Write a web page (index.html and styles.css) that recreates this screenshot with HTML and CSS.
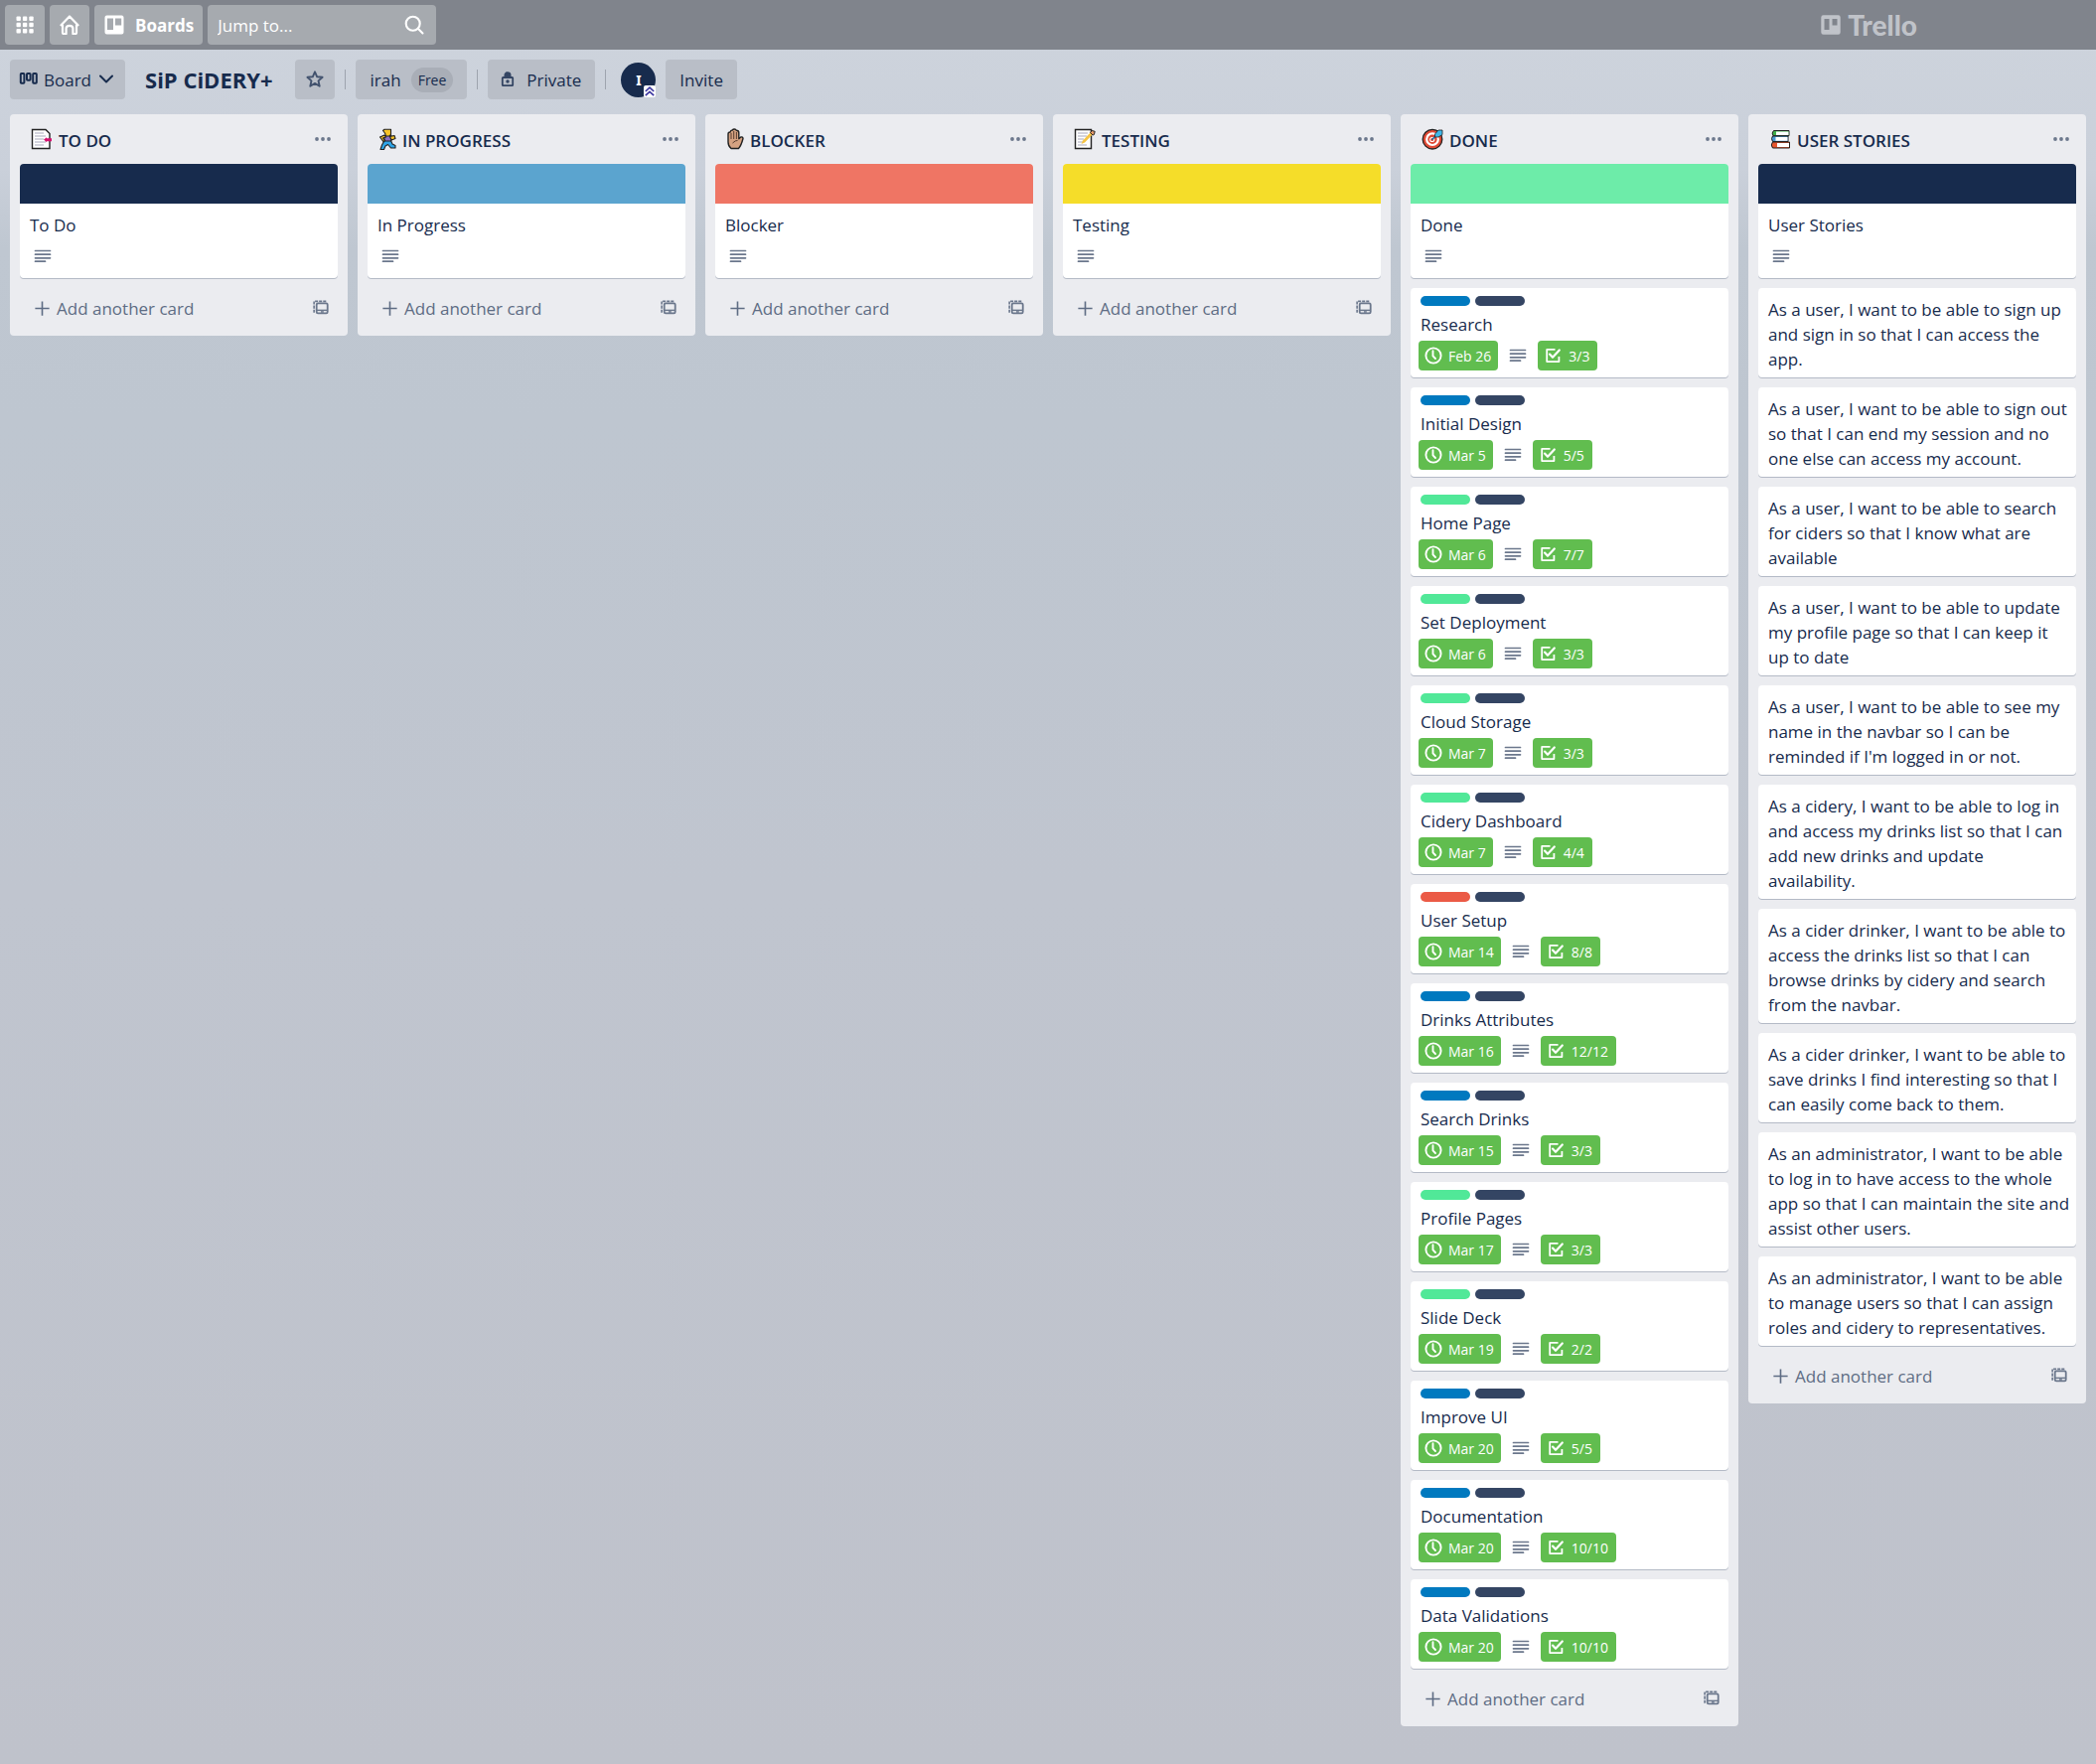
FILE: index.html
```html
<!DOCTYPE html>
<html lang="en">
<head>
<meta charset="utf-8">
<meta name="viewport" content="width=device-width, initial-scale=1">
<title>SiP CiDERY+ | Trello</title>
<link rel="stylesheet" href="styles.css">
</head>
<body>
<svg class="sprite" aria-hidden="true">
  <symbol id="i-desc" viewBox="0 0 20 20"><path d="M2.500 4.500h15M2.500 8.200h15M2.500 11.800h15M2.500 15.200h10" fill="none" stroke="currentColor" stroke-width="1.700" stroke-linecap="round"/></symbol>
  <symbol id="i-clock" viewBox="0 0 20 20"><circle cx="10" cy="10" r="7.600" fill="none" stroke="currentColor" stroke-width="1.900"/><path d="M9.500 5.200v5.200l2.500 2.600" fill="none" stroke="currentColor" stroke-width="1.900" stroke-linecap="round"/></symbol>
  <symbol id="i-check" viewBox="0 0 20 20"><path d="M12.500 3.900H4.200v12.200h12.200V11" fill="none" stroke="currentColor" stroke-width="1.800" stroke-linejoin="round"/><path d="M7 8.600l3 3.200 6.800-7.300" fill="none" stroke="currentColor" stroke-width="2.200" stroke-linecap="round" stroke-linejoin="round"/></symbol>
  <symbol id="i-plus" viewBox="0 0 20 20"><path d="M10 2.500v15M2.500 10h15" fill="none" stroke="currentColor" stroke-width="1.700"/></symbol>
  <symbol id="i-dots" viewBox="0 0 20 20"><circle cx="4" cy="10" r="1.900" fill="currentColor"/><circle cx="10" cy="10" r="1.900" fill="currentColor"/><circle cx="16" cy="10" r="1.900" fill="currentColor"/></symbol>
  <symbol id="i-template" viewBox="0 0 20 20"><path d="M3.300 15.500V3.600h13" fill="none" stroke="currentColor" stroke-width="1.700" stroke-dasharray="3.200 1.100"/><rect x="6" y="5.600" width="11.600" height="10.600" rx="1.400" fill="none" stroke="currentColor" stroke-width="1.900"/><path d="M6 13h11.500" stroke="currentColor" stroke-width="1.500"/><path d="M10.500 14.700h3" stroke="currentColor" stroke-width="1.600"/></symbol>
</svg>

<header class="topbar">
  <button class="tile" type="button" aria-label="More from Atlassian"><svg class="icon20" viewBox="0 0 20 20" fill="#fff"><rect x="1.500" y="1.500" width="4.400" height="4.400" rx="1"/><rect x="7.900" y="1.500" width="4.400" height="4.400" rx="1"/><rect x="14.300" y="1.500" width="4.400" height="4.400" rx="1"/><rect x="1.500" y="7.800" width="4.400" height="4.400" rx="1"/><rect x="7.900" y="7.800" width="4.400" height="4.400" rx="1"/><rect x="14.300" y="7.800" width="4.400" height="4.400" rx="1"/><rect x="1.500" y="14" width="4.400" height="4.400" rx="1"/><rect x="7.900" y="14" width="4.400" height="4.400" rx="1"/><rect x="14.300" y="14" width="4.400" height="4.400" rx="1"/></svg></button>
  <button class="tile" type="button" aria-label="Home"><svg class="icon20" viewBox="0 0 20 20" fill="none" stroke="#fff" stroke-width="2.200" stroke-linejoin="round" stroke-linecap="round"><path d="M3 10.500v7.500q0 1 1 1h2.600v-5.500q0-2.700 3.400-2.700t3.400 2.700V19H16q1 0 1-1v-7.500M1.500 10.300 10 1.500l8.500 8.800"/></svg></button>
  <button class="tile tile-boards" type="button"><svg class="icon20" viewBox="0 0 20 20"><path fill="#fff" fill-rule="evenodd" d="M2.500.5h15a2 2 0 0 1 2 2v15a2 2 0 0 1-2 2h-15a2 2 0 0 1-2-2v-15a2 2 0 0 1 2-2zM3 3.500v11.500h6V3.500zM11 3.500v7h6.200v-7z"/></svg><span>Boards</span></button>
  <label class="search"><input type="text" placeholder="Jump to..." aria-label="Jump to"><svg class="icon20" viewBox="0 0 20 20" fill="none" stroke="#fff" stroke-width="2.100" stroke-linecap="round"><circle cx="8.700" cy="8.700" r="7"/><path d="M13.800 13.800 18.500 18.500"/></svg></label>
  <a class="logo" href="#"><svg class="icon20" viewBox="0 0 20 20"><path fill="currentColor" fill-rule="evenodd" d="M2.500.3h15a2.200 2.200 0 0 1 2.200 2.200v15a2.200 2.200 0 0 1-2.200 2.200h-15a2.200 2.200 0 0 1-2.200-2.200v-15A2.200 2.200 0 0 1 2.500.3zM3.500 4v11h5V4zM11.500 4v6.500h5V4z"/></svg><span>Trello</span></a>
</header>

<main>
  <div class="board-header">
    <button class="btn btn-view" type="button"><svg class="icon20" viewBox="0 0 20 20" fill="none" stroke="#172b4d" stroke-width="2"><rect x="1.800" y="4" width="3.600" height="9.800" rx=".8"/><rect x="8" y="4" width="3.600" height="6.800" rx=".8"/><rect x="14.200" y="4" width="3.600" height="9.800" rx=".8"/></svg><span>Board</span><svg class="icon20 chevron" viewBox="0 0 20 20" fill="none" stroke="#172b4d" stroke-width="2" stroke-linecap="round" stroke-linejoin="round"><path d="M4 6.500 10 12.500 16 6.500"/></svg></button>
    <h1>SiP CiDERY+</h1>
    <button class="btn btn-star" type="button" aria-label="Star board"><svg class="icon20" viewBox="0 0 20 20" fill="none" stroke="#42526e" stroke-width="1.900" stroke-linejoin="round"><path d="M10 2.300l2.200 5 5.400.5-4.100 3.600 1.200 5.300L10 13.900l-4.700 2.800 1.200-5.300L2.400 7.800l5.400-.5z"/></svg></button>
    <span class="divider"></span>
    <button class="btn btn-team" type="button">irah <span class="pill">Free</span></button>
    <span class="divider"></span>
    <button class="btn btn-private" type="button"><svg class="icon20" viewBox="0 0 20 20"><path fill="#344563" fill-rule="evenodd" d="M6.500 7V5.500C6.500 3.500 8 2.300 10 2.300s3.500 1.200 3.500 3.200V7H14.500a1.600 1.600 0 0 1 1.600 1.600v6.900a1.600 1.600 0 0 1-1.600 1.600h-9a1.600 1.600 0 0 1-1.600-1.600V8.600A1.600 1.600 0 0 1 5.500 7zM5.700 8.900v6.400h8.600V8.900z"/><circle cx="10" cy="12" r="1.700" fill="#344563"/></svg><span>Private</span></button>
    <span class="divider"></span>
    <div class="avatar">I<svg viewBox="0 0 12 12"><rect width="12" height="12" rx="2" fill="#fff"/><path d="M1.800 6 6 2.200 10.200 6M1.800 10.200 6 6.400l4.200 3.800" fill="none" stroke="#3b35a0" stroke-width="1.600"/></svg></div>
    <button class="btn btn-invite" type="button">Invite</button>
  </div>

  <div class="lists">
    <section class="list">
      <div class="list-head"><svg class="emoji" viewBox="0 0 22 22"><path d="M1.500 1.500H15l4 4v15h-17.500z" fill="#fff" stroke="#222" stroke-width="1.400"/><path d="M4 5h9M4 8h11M4 11h9M4 14h11M4 17h9" stroke="#aab" stroke-width="1.200"/><path d="M13 11.500l3-2.200v1h5v3h-5v1z" fill="#d6116f"/></svg><h2>TO DO</h2><button class="menu" type="button" aria-label="List actions"><svg><use href="#i-dots"/></svg></button></div>
      <article class="card"><div class="cover navy"></div><p>To Do</p><div class="badges"><svg class="desc"><use href="#i-desc"/></svg></div></article>
      <div class="list-foot"><button class="add" type="button"><svg><use href="#i-plus"/></svg>Add another card</button><button class="template" type="button" aria-label="Create from template"><svg><use href="#i-template"/></svg></button></div>
    </section>

    <section class="list">
      <div class="list-head"><svg class="emoji emoji-slim" viewBox="0 0 18 22"><g stroke="#222" stroke-width="1.100" stroke-linejoin="round"><path d="M6 12.500h6.500l1.500 3.500 3 1.500V20h-4.500l-3-3.500L7 18l-1.500 3.500H2L3.500 17z" fill="#2fa5e8"/><path d="M5 7.500h7l2.500 1-2 4.500H6.500z" fill="#8b6fc0"/><path d="M1.500 9 6 7l1.500 2-3 1 2 2.500-1.500 1.200zM11.500 8.500l4.500-1 1 3-4 1.500z" fill="#f7c325"/><path d="M4.500 2.500 6 1.300h6.500v5.200L11 8H7.500L6.500 5z" fill="#f7c325"/></g></svg><h2>IN PROGRESS</h2><button class="menu" type="button" aria-label="List actions"><svg><use href="#i-dots"/></svg></button></div>
      <article class="card"><div class="cover blue"></div><p>In Progress</p><div class="badges"><svg class="desc"><use href="#i-desc"/></svg></div></article>
      <div class="list-foot"><button class="add" type="button"><svg><use href="#i-plus"/></svg>Add another card</button><button class="template" type="button" aria-label="Create from template"><svg><use href="#i-template"/></svg></button></div>
    </section>

    <section class="list">
      <div class="list-head"><svg class="emoji emoji-slim" viewBox="0 0 18 22"><path d="M2 6q0-2 2-2 .5-2 2.300-2 .7-1 2-1 1.500 0 2 1.200 2.500 0 2.500 2.500v6l2-1.700q2-.5 2.200 1.500Q15 18 12.500 20.500H5Q2 18 2 14z" fill="#d5a281" stroke="#222" stroke-width="1.400" stroke-linejoin="round"/><path d="M5 5v6M7.700 3v8M10.400 4v7M6.500 15q3-3 5-2.500" fill="none" stroke="#4a3226" stroke-width=".9"/></svg><h2>BLOCKER</h2><button class="menu" type="button" aria-label="List actions"><svg><use href="#i-dots"/></svg></button></div>
      <article class="card"><div class="cover coral"></div><p>Blocker</p><div class="badges"><svg class="desc"><use href="#i-desc"/></svg></div></article>
      <div class="list-foot"><button class="add" type="button"><svg><use href="#i-plus"/></svg>Add another card</button><button class="template" type="button" aria-label="Create from template"><svg><use href="#i-template"/></svg></button></div>
    </section>

    <section class="list">
      <div class="list-head"><svg class="emoji" viewBox="0 0 22 22"><path d="M1.500 1.500h16v19h-16z" fill="#fff" stroke="#222" stroke-width="1.400"/><path d="M4 5h10M4 8h9M4 11h6M4 14h5M4 17h9" stroke="#aab" stroke-width="1.200"/><path d="M7.500 16 9 12.500l8-8.500 2.200 2L11 14.500z" fill="#f6c443"/><path d="m16.500 4.500 1.700-2 3 .8-.8 3.200-1.300.5z" fill="#e79a6b" stroke="#222"/></svg><h2>TESTING</h2><button class="menu" type="button" aria-label="List actions"><svg><use href="#i-dots"/></svg></button></div>
      <article class="card"><div class="cover yellow"></div><p>Testing</p><div class="badges"><svg class="desc"><use href="#i-desc"/></svg></div></article>
      <div class="list-foot"><button class="add" type="button"><svg><use href="#i-plus"/></svg>Add another card</button><button class="template" type="button" aria-label="Create from template"><svg><use href="#i-template"/></svg></button></div>
    </section>

    <section class="list">
      <div class="list-head"><svg class="emoji" viewBox="0 0 22 22"><circle cx="11" cy="11.200" r="9.800" fill="#e04a35" stroke="#222" stroke-width="1.300"/><circle cx="11" cy="11.200" r="5.800" fill="none" stroke="#fff" stroke-width="2.200"/><circle cx="10.700" cy="11.500" r="2.600" fill="#fff"/><circle cx="10.700" cy="11.500" r="1.500" fill="#e04a35"/><path d="M10.500 11.700 15 7" stroke="#1d6fa5" stroke-width="1.600"/><path d="m13.500 6 3.500-4h4v4.500l-4 2.500h-3.500z" fill="#3fb8ea" stroke="#222" stroke-width=".8"/></svg><h2>DONE</h2><button class="menu" type="button" aria-label="List actions"><svg><use href="#i-dots"/></svg></button></div>
      <article class="card"><div class="cover mint"></div><p>Done</p><div class="badges"><svg class="desc"><use href="#i-desc"/></svg></div></article>
      <article class="card"><div class="labels"><i class="l-blue"></i><i class="l-dark"></i></div><p>Research</p><div class="badges"><span class="badge"><svg><use href="#i-clock"/></svg>Feb 26</span><svg class="desc"><use href="#i-desc"/></svg><span class="badge checks"><svg><use href="#i-check"/></svg>3/3</span></div></article>
      <article class="card"><div class="labels"><i class="l-blue"></i><i class="l-dark"></i></div><p>Initial Design</p><div class="badges"><span class="badge"><svg><use href="#i-clock"/></svg>Mar 5</span><svg class="desc"><use href="#i-desc"/></svg><span class="badge checks"><svg><use href="#i-check"/></svg>5/5</span></div></article>
      <article class="card"><div class="labels"><i class="l-green"></i><i class="l-dark"></i></div><p>Home Page</p><div class="badges"><span class="badge"><svg><use href="#i-clock"/></svg>Mar 6</span><svg class="desc"><use href="#i-desc"/></svg><span class="badge checks"><svg><use href="#i-check"/></svg>7/7</span></div></article>
      <article class="card"><div class="labels"><i class="l-green"></i><i class="l-dark"></i></div><p>Set Deployment</p><div class="badges"><span class="badge"><svg><use href="#i-clock"/></svg>Mar 6</span><svg class="desc"><use href="#i-desc"/></svg><span class="badge checks"><svg><use href="#i-check"/></svg>3/3</span></div></article>
      <article class="card"><div class="labels"><i class="l-green"></i><i class="l-dark"></i></div><p>Cloud Storage</p><div class="badges"><span class="badge"><svg><use href="#i-clock"/></svg>Mar 7</span><svg class="desc"><use href="#i-desc"/></svg><span class="badge checks"><svg><use href="#i-check"/></svg>3/3</span></div></article>
      <article class="card"><div class="labels"><i class="l-green"></i><i class="l-dark"></i></div><p>Cidery Dashboard</p><div class="badges"><span class="badge"><svg><use href="#i-clock"/></svg>Mar 7</span><svg class="desc"><use href="#i-desc"/></svg><span class="badge checks"><svg><use href="#i-check"/></svg>4/4</span></div></article>
      <article class="card"><div class="labels"><i class="l-red"></i><i class="l-dark"></i></div><p>User Setup</p><div class="badges"><span class="badge"><svg><use href="#i-clock"/></svg>Mar 14</span><svg class="desc"><use href="#i-desc"/></svg><span class="badge checks"><svg><use href="#i-check"/></svg>8/8</span></div></article>
      <article class="card"><div class="labels"><i class="l-blue"></i><i class="l-dark"></i></div><p>Drinks Attributes</p><div class="badges"><span class="badge"><svg><use href="#i-clock"/></svg>Mar 16</span><svg class="desc"><use href="#i-desc"/></svg><span class="badge checks"><svg><use href="#i-check"/></svg>12/12</span></div></article>
      <article class="card"><div class="labels"><i class="l-blue"></i><i class="l-dark"></i></div><p>Search Drinks</p><div class="badges"><span class="badge"><svg><use href="#i-clock"/></svg>Mar 15</span><svg class="desc"><use href="#i-desc"/></svg><span class="badge checks"><svg><use href="#i-check"/></svg>3/3</span></div></article>
      <article class="card"><div class="labels"><i class="l-green"></i><i class="l-dark"></i></div><p>Profile Pages</p><div class="badges"><span class="badge"><svg><use href="#i-clock"/></svg>Mar 17</span><svg class="desc"><use href="#i-desc"/></svg><span class="badge checks"><svg><use href="#i-check"/></svg>3/3</span></div></article>
      <article class="card"><div class="labels"><i class="l-green"></i><i class="l-dark"></i></div><p>Slide Deck</p><div class="badges"><span class="badge"><svg><use href="#i-clock"/></svg>Mar 19</span><svg class="desc"><use href="#i-desc"/></svg><span class="badge checks"><svg><use href="#i-check"/></svg>2/2</span></div></article>
      <article class="card"><div class="labels"><i class="l-blue"></i><i class="l-dark"></i></div><p>Improve UI</p><div class="badges"><span class="badge"><svg><use href="#i-clock"/></svg>Mar 20</span><svg class="desc"><use href="#i-desc"/></svg><span class="badge checks"><svg><use href="#i-check"/></svg>5/5</span></div></article>
      <article class="card"><div class="labels"><i class="l-blue"></i><i class="l-dark"></i></div><p>Documentation</p><div class="badges"><span class="badge"><svg><use href="#i-clock"/></svg>Mar 20</span><svg class="desc"><use href="#i-desc"/></svg><span class="badge checks"><svg><use href="#i-check"/></svg>10/10</span></div></article>
      <article class="card"><div class="labels"><i class="l-blue"></i><i class="l-dark"></i></div><p>Data Validations</p><div class="badges"><span class="badge"><svg><use href="#i-clock"/></svg>Mar 20</span><svg class="desc"><use href="#i-desc"/></svg><span class="badge checks"><svg><use href="#i-check"/></svg>10/10</span></div></article>
      <div class="list-foot"><button class="add" type="button"><svg><use href="#i-plus"/></svg>Add another card</button><button class="template" type="button" aria-label="Create from template"><svg><use href="#i-template"/></svg></button></div>
    </section>

    <section class="list">
      <div class="list-head"><svg class="emoji" viewBox="0 0 22 22"><g stroke="#222" stroke-width="1"><path d="M20 2.500H4.500Q2 5 4 7.700H20z" fill="#3fae49"/><path d="M19 8H3.500Q1.500 10.500 3.500 13.500H19z" fill="#4a9ad4"/><path d="M20.500 14H3.500Q1 17 3.500 20H20.500z" fill="#e8562f"/></g><path d="M7 3.500h12.500v3.400H7zM6.500 9H18.500v3.800H6.500zM8 15h12v4H8z" fill="#fff"/></svg><h2>USER STORIES</h2><button class="menu" type="button" aria-label="List actions"><svg><use href="#i-dots"/></svg></button></div>
      <article class="card"><div class="cover navy"></div><p>User Stories</p><div class="badges"><svg class="desc"><use href="#i-desc"/></svg></div></article>
      <article class="card"><p>As a user, I want to be able to sign up and sign in so that I can access the app.</p></article>
      <article class="card"><p>As a user, I want to be able to sign out so that I can end my session and no one else can access my account.</p></article>
      <article class="card"><p>As a user, I want to be able to search for ciders so that I know what are available</p></article>
      <article class="card"><p>As a user, I want to be able to update my profile page so that I can keep it up&nbsp;to date</p></article>
      <article class="card"><p>As a user, I want to be able to see my name in the navbar so I can be reminded if I'm logged in or not.</p></article>
      <article class="card"><p>As a cidery, I want to be able to log in and access my drinks list so that I can add new drinks and update availability.</p></article>
      <article class="card"><p>As a cider drinker, I want to be able to access the drinks list so that I can browse drinks by cidery and search from the navbar.</p></article>
      <article class="card"><p>As a cider drinker, I want to be able to save drinks I find interesting so that I can easily come back to them.</p></article>
      <article class="card"><p>As an administrator, I want to be able to log in to have access to the whole app so that I can maintain the site and assist other users.</p></article>
      <article class="card"><p>As an administrator, I want to be able to manage users so that I can assign roles and cidery to representatives.</p></article>
      <div class="list-foot"><button class="add" type="button"><svg><use href="#i-plus"/></svg>Add another card</button><button class="template" type="button" aria-label="Create from template"><svg><use href="#i-template"/></svg></button></div>
    </section>
  </div>
</main>
</body>
</html>
```

FILE: styles.css
```css
* { box-sizing: border-box; }

body {
  margin: 0;
  min-height: 100vh;
  font: 17px/25px "Open Sans", "Noto Sans", sans-serif;
  color: #172b4d;
  background: linear-gradient(#ced4dd 0, #cad0da 170px, #bfc7d1 250px, #bec6d0 420px, #c0c5cf 900px, #bfc2cb 100%);
}

button, input { font: inherit; color: inherit; border: 0; margin: 0; }
button { cursor: pointer; }
h1, h2, p { margin: 0; }
svg { display: block; flex: none; }

.sprite { position: absolute; width: 0; height: 0; }
.icon20 { width: 20px; height: 20px; }

.topbar {
  display: flex;
  align-items: center;
  gap: 5px;
  height: 50px;
  padding: 5px;
  background: #80848c;
}

.tile, .search {
  display: flex;
  align-items: center;
  justify-content: center;
  height: 40px;
  border-radius: 4px;
  background: #a6aaaf;
  color: #fff;
}
.tile { width: 40px; padding: 0; }
.tile-boards { width: auto; padding: 0 9px 0 10px; gap: 11px; font-weight: 700; }

.search { width: 230px; padding: 0 12px 0 10px; }
.search input { flex: 1; min-width: 0; padding: 0; background: none; outline: 0; }
.search input::placeholder { color: #fff; opacity: 1; }

.logo {
  display: flex;
  align-items: center;
  gap: 7px;
  margin-left: auto;
  margin-right: 175px;
  font: 900 28px/30px Lato, sans-serif;
  color: #c0c3c9;
  text-decoration: none;
}

.board-header {
  display: flex;
  align-items: center;
  gap: 10px;
  padding: 10px 10px 15px;
}
.board-header h1 { padding: 0 12px 0 10px; font-size: 22px; line-height: 40px; font-weight: 700; }

.btn {
  display: flex;
  align-items: center;
  height: 40px;
  padding: 0 15px;
  border-radius: 4px;
  background: #b9bec7;
}
.btn-view { padding: 0 9px; gap: 5px; }
.btn-star { padding: 0 10px; }
.btn-team { padding: 0 14px 0 15px; gap: 10px; }
.btn-private { padding: 0 14px 0 10px; gap: 9px; }
.btn-invite { padding: 0 14px; }

.pill {
  padding: 0 7px;
  border-radius: 13px;
  background: #a9aeb7;
  font-size: 14px;
}

.divider { width: 1px; height: 20px; background: #9ea4ae; }

.avatar {
  position: relative;
  width: 35px;
  height: 35px;
  margin-left: 5px;
  border-radius: 50%;
  background: #172b4d;
  color: #fff;
  font: 700 14px/35px "Noto Sans", sans-serif;
  text-align: center;
}
.avatar svg { position: absolute; right: 0; bottom: 0; width: 12px; height: 12px; }

.lists {
  display: flex;
  align-items: flex-start;
  gap: 10px;
  padding: 0 10px 10px;
}

.list {
  flex: 1 0 340px;
  max-width: 340px;
  padding: 0 10px 9px;
  border-radius: 4px;
  background: #ebecf0;
}

.list-head { display: flex; align-items: center; gap: 6px; height: 50px; padding-left: 11px; }
.list-head h2 { padding-top: 2px; font-size: 17px; line-height: 25px; font-weight: 600; }
.emoji { width: 22px; height: 22px; }
.emoji-slim { width: 18px; }

.menu, .template { margin-left: auto; padding: 0 5px; background: none; color: #6b778c; }
.menu svg { width: 20px; height: 20px; }
.list-foot .template { padding: 0 8px; }

.card {
  margin-bottom: 10px;
  padding: 9px 4px 6px 10px;
  overflow: hidden;
  border-radius: 4px;
  background: #fff;
  box-shadow: 0 1px 0 #b4bac6;
}

.cover { height: 40px; margin: -9px -4px 9px -10px; }
.navy { background: #172b4d; }
.blue { background: #5ba4cf; }
.coral { background: #ef7564; }
.yellow { background: #f5dd29; }
.mint { background: #6deca9; }

.labels { display: flex; gap: 5px; margin: -1px 0 6px; }
.labels i { width: 50px; height: 10px; border-radius: 5px; }
.l-blue { background: #0079bf; }
.l-green { background: #51e898; }
.l-red { background: #eb5a46; }
.l-dark { background: #344563; }

.badges { display: flex; align-items: center; gap: 5px; height: 30px; margin: 4px -2px 1px; }
.badges svg { width: 20px; height: 20px; }
.badges .desc { width: 30px; padding: 0 5px; color: #6b778c; }
.badge {
  display: flex;
  align-items: center;
  gap: 5px;
  height: 30px;
  padding: 0 7px 0 5px;
  border-radius: 4px;
  background: #61bd4f;
  color: #fff;
  font-size: 14px;
}
.checks { gap: 6px; padding-right: 8px; }

.list-foot { display: flex; align-items: center; height: 39px; }
.add { display: flex; align-items: center; gap: 5px; padding: 1px 0 0 13px; background: none; color: #5e6c84; }
.list-foot svg { width: 19px; height: 19px; }
```
